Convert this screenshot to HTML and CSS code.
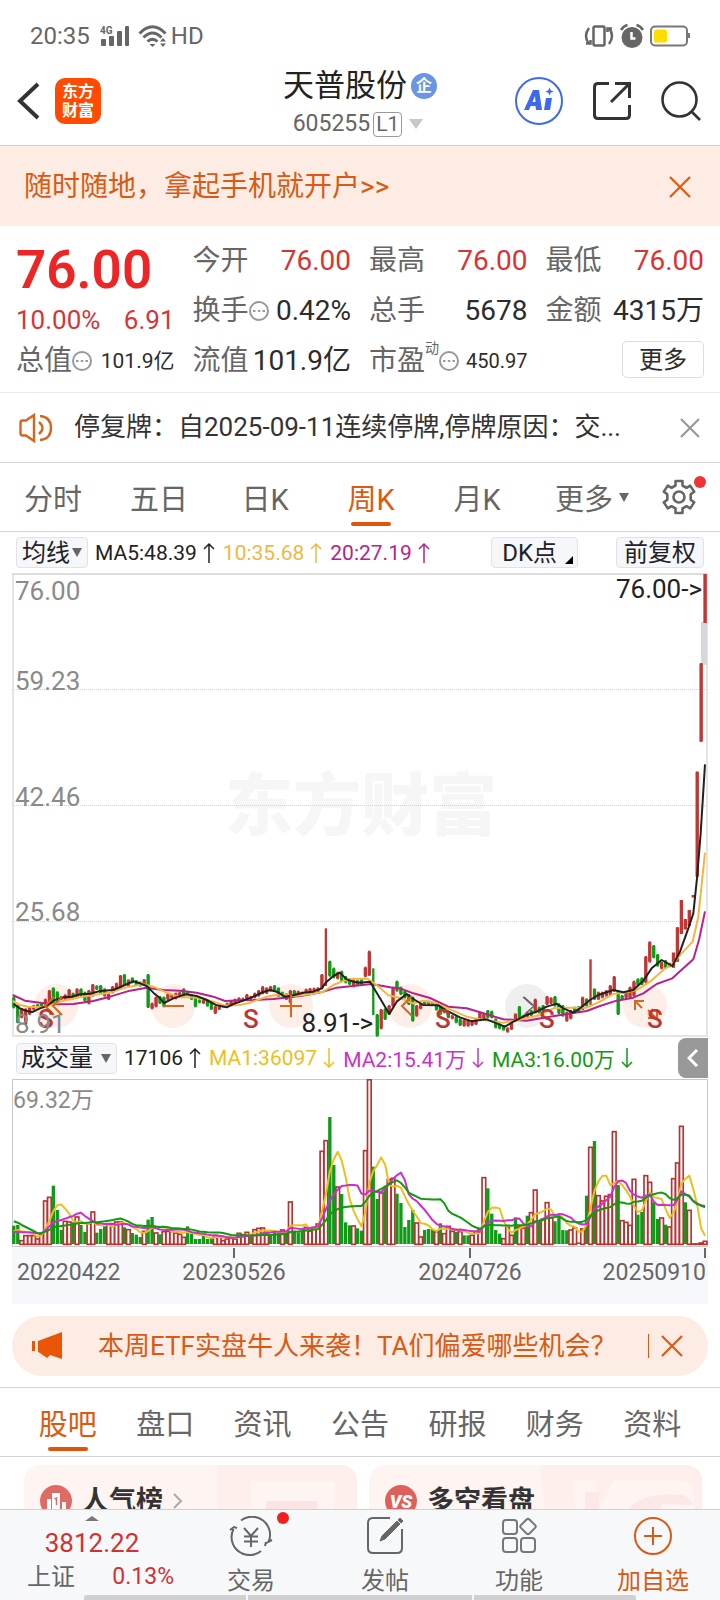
FILE: index.html
```html
<!DOCTYPE html>
<html lang="zh-CN">
<head>
<meta charset="utf-8">
<meta name="viewport" content="width=device-width, initial-scale=1">
<title>天普股份 605255</title>
<link rel="stylesheet" href="styles.css">
</head>
<body>
<div class="app">
  <div class="status">
    <div class="status-side">
      <span class="clock">20:35</span>
      <svg class="signal" width="30" height="22" viewBox="0 0 30 22" fill="#666"><text x="0" y="9" font-size="10" font-weight="700">4G</text><rect x="1" y="14" width="5" height="7" rx="1"/><rect x="9" y="11" width="5" height="10" rx="1"/><rect x="17" y="6" width="5" height="15" rx="1"/><rect x="25" y="1" width="4" height="20" rx="1"/></svg>
      <svg class="wifi" width="30" height="24" viewBox="0 0 30 24" fill="none" stroke="#666" stroke-width="3"><path d="M1.500 9.500Q14.500-4 27.500 9.500M5.500 13.500Q14.500 4.500 23.500 13.500M9.500 17.500Q14.500 13 19.500 17.500"/><path d="M11.500 20h6L14.500 23zM22 17.500L25 14l3 3.500zM22 19.500h6L25 23z" fill="#666" stroke="none"/></svg>
      <span class="clock">HD</span>
    </div>
    <div class="status-side status-icons">
      <svg width="30" height="24" viewBox="0 0 30 24" fill="none" stroke="#666" stroke-width="2.500"><rect x="9.500" y="2.500" width="11" height="19" rx="1.500"/><path d="M5 4Q-1 12 5 20M25 4Q31 12 25 20M2 19.500h4.500V16M28 4.500h-4.500V8"/></svg>
      <svg width="26" height="26" viewBox="0 0 26 26" fill="none" stroke="#666" stroke-width="2.500"><circle cx="13" cy="14.500" r="10.500" fill="#666" stroke="none"/><path d="M2 7Q4.500 3 8.500 2M24 7Q21.500 3 17.500 2"/><path d="M12.500 9v6.500h4" stroke="#fff"/></svg>
      <svg width="41" height="22" viewBox="0 0 41 22"><rect x="1" y="1.500" width="36" height="19" rx="4" fill="none" stroke="#777" stroke-width="2"/><rect x="4" y="4.500" width="13" height="13" rx="2" fill="#ffdc00"/><rect x="38" y="8" width="2" height="5" fill="#777"/></svg>
    </div>
  </div>

  <header class="header">
    <div class="header-left">
      <button class="icon-button" aria-label="返回"><svg width="24" height="38" viewBox="0 0 24 38" fill="none" stroke="#333" stroke-width="4"><path d="M21 2L3 19l18 17"/></svg></button>
      <span class="brand">东方<br>财富</span>
    </div>
    <div class="header-title">
      <h1>天普股份<span class="badge">企</span></h1>
      <div class="code">605255<span class="level">L1</span><svg width="14" height="10" viewBox="0 0 14 10" fill="#c8c8c8"><path d="M0 0h14L7 10z"/></svg></div>
    </div>
    <div class="header-right">
      <button class="icon-button" aria-label="AI"><svg width="48" height="48" viewBox="0 0 48 48"><circle cx="24" cy="24" r="23" fill="none" stroke="#3d68f0" stroke-width="2"/><path d="M9 33L18 13h6l3 20h-6l-.5-4h-5L14 33zM17.500 25h3l-.5-6zM31 21h6l-2 12h-6zM34.500 10.500l1.200 2.800 2.800 1.200-2.800 1.200-1.200 2.800-1.200-2.800-2.800-1.200 2.800-1.200z" fill="#3d68f0" fill-rule="evenodd"/></svg></button>
      <button class="icon-button" aria-label="分享"><svg width="38" height="40" viewBox="0 0 38 40" fill="none" stroke="#333" stroke-width="3"><path d="M16 2.500H5Q1.500 2.500 1.500 6V34Q1.500 37.500 5 37.500H33Q36.500 37.500 36.500 34V24M22 2.500H36.500V17M36 3L18 21"/></svg></button>
      <button class="icon-button" aria-label="搜索"><svg width="40" height="40" viewBox="0 0 40 40" fill="none" stroke="#333" stroke-width="2.600"><circle cx="18.500" cy="18.500" r="17"/><path d="M30.500 30.500L39 39"/></svg></button>
    </div>
  </header>

  <main class="content">
    <div class="open-banner">
      <a href="#">随时随地，拿起手机就开户&gt;&gt;</a>
      <button class="icon-button" aria-label="关闭"><svg width="22" height="22" viewBox="0 0 22 22" stroke="#de5a12" stroke-width="2.200"><path d="M1 1l20 20M21 1L1 21"/></svg></button>
    </div>

    <section class="quote">
      <div class="quote-main">
        <div class="price">76.00</div>
        <div class="pair change"><span>10.00%</span><span>6.91</span></div>
      </div>
      <div class="pair up"><span class="name">今开</span><span>76.00</span></div>
      <div class="pair up"><span class="name">最高</span><span>76.00</span></div>
      <div class="pair up"><span class="name">最低</span><span>76.00</span></div>
      <div class="pair"><span class="name">换手<svg class="dots" viewBox="0 0 20 20"><circle cx="10" cy="10" r="9"/><path d="M4 10h2.500M8.800 10h2.500M13.500 10H16"/></svg></span><span>0.42%</span></div>
      <div class="pair"><span class="name">总手</span><span>5678</span></div>
      <div class="pair"><span class="name">金额</span><span>4315万</span></div>
      <div class="pair"><span class="name">总值<svg class="dots" viewBox="0 0 20 20"><circle cx="10" cy="10" r="9"/><path d="M4 10h2.500M8.800 10h2.500M13.500 10H16"/></svg></span><span class="small">101.9亿</span></div>
      <div class="pair"><span class="name">流值</span><span>101.9亿</span></div>
      <div class="pair"><span class="name">市盈<sup>动</sup><svg class="dots" viewBox="0 0 20 20"><circle cx="10" cy="10" r="9"/><path d="M4 10h2.500M8.800 10h2.500M13.500 10H16"/></svg></span><span class="tiny">450.97</span></div>
      <button class="more-button">更多</button>
    </section>

    <div class="notice">
      <svg width="34" height="30" viewBox="0 0 34 30" fill="none" stroke="#d9641e" stroke-width="2.400"><path d="M15 2v26L7 22.500H3.500Q1.500 22.500 1.500 20.500V9.500Q1.500 7.500 3.500 7.500H7z"/><path d="M20 9Q27 15 20 21M21 3Q32 4 32 15T21 27"/></svg>
      <p>停复牌：自2025-09-11连续停牌,停牌原因：交...</p>
      <button class="icon-button" aria-label="关闭"><svg width="20" height="20" viewBox="0 0 20 20" stroke="#999" stroke-width="2.200"><path d="M1 1l18 18M19 1L1 19"/></svg></button>
    </div>

    <nav class="period-tabs">
      <button>分时</button>
      <button>五日</button>
      <button>日K</button>
      <button class="active">周K</button>
      <button>月K</button>
      <button>更多<svg width="10" height="9" viewBox="0 0 10 9" fill="#666"><path d="M0 0h10L5 9z"/></svg></button>
      <button class="gear" aria-label="设置"><svg width="36" height="36" viewBox="0 0 36 36" fill="none" stroke="#666" stroke-width="2.600" stroke-linejoin="round"><path d="M14.500 2h7v4.500l4 2.300 3.700-2.200 4 6-3.500 2.600v5.600l3.500 2.600-4 6-3.700-2.200-4 2.300V34h-7v-4.500l-4-2.300-3.700 2.200-4-6 3.500-2.600v-5.600L2.800 12.600l4-6 3.700 2.200 4-2.300z"/><circle cx="18" cy="18" r="5.500"/></svg></button>
    </nav>

    <div class="indicator-row">
      <label class="picker picker-ma"><select aria-label="均线"><option>均线</option></select><svg width="10" height="9" viewBox="0 0 10 9" fill="#666"><path d="M0 0h10L5 9z"/></svg></label>
      <span class="ma dark">MA5:48.39<svg class="arrow" viewBox="0 0 12 22"><path d="M6 21V2M1 7l5-5 5 5"/></svg></span>
      <span class="ma gold">10:35.68<svg class="arrow" viewBox="0 0 12 22"><path d="M6 21V2M1 7l5-5 5 5"/></svg></span>
      <span class="ma plum">20:27.19<svg class="arrow" viewBox="0 0 12 22"><path d="M6 21V2M1 7l5-5 5 5"/></svg></span>
      <button class="chip chip-dk">DK点<svg width="8" height="8" viewBox="0 0 8 8"><path d="M8 0v8H0z"/></svg></button>
      <button class="chip">前复权</button>
    </div>

    <svg class="price-chart" viewBox="0 0 696 464" role="img" aria-label="周K线">
      <text class="watermark" x="349" y="257" text-anchor="middle">东方财富</text>
      <path class="grid" d="M0 116.500H696M0 232.500H696M0 348.500H696"/>
      <path d="M1 0V463H695V0" fill="none" stroke="#ddd" stroke-width="1.500"/>
      <path d="M0 1H696" stroke="#ddd" stroke-width="2"/>
      <g fill="#fdeee8"><circle cx="44" cy="433" r="22"/><circle cx="161" cy="433" r="22"/><circle cx="279" cy="433" r="22"/><circle cx="398" cy="433" r="22"/><circle cx="515" cy="433" r="22" fill="#efefef"/><circle cx="633" cy="433" r="22"/></g>
      <rect x="689" y="49" width="6" height="43" fill="#d5d8dc"/>
      <g id="candles" transform="translate(-12 327) scale(.33333)"></g>
      <g class="markers"><path d="M42 424l-9 9 9 9M50 424l-9 9 9 9M151 433h21M268 433h22M279 422v22M400 423l-10 10 10 10"/><path d="M512 424l10 9-10 9M511 424l9 8" stroke="#666" stroke-width="1.500"/><path d="M623 437v-9h9M624 429l6 6M636 437l8 8M645 436v9h-9M637 440l4-4"/></g>
      <g class="sell"><text x="26" y="455">S</text><text x="231" y="455">S</text><text x="423" y="455">S</text><text x="527" y="455">S</text><text x="635" y="455">S</text></g>
      <g class="axis"><text x="3" y="27">76.00</text><text x="3" y="117">59.23</text><text x="3" y="233">42.46</text><text x="3" y="348">25.68</text><text x="3" y="460">8.91</text></g>
      <g class="axis mark"><text x="690" y="25" text-anchor="end">76.00-&gt;</text><text x="361" y="459" text-anchor="end">8.91-&gt;</text></g>
    </svg>

    <div class="indicator-row volume-row">
      <label class="picker picker-vol"><select aria-label="指标"><option>成交量</option></select><svg width="10" height="9" viewBox="0 0 10 9" fill="#666"><path d="M0 0h10L5 9z"/></svg></label>
      <span class="ma dark">17106<svg class="arrow" viewBox="0 0 12 22"><path d="M6 21V2M1 7l5-5 5 5"/></svg></span>
      <span class="ma yellow">MA1:36097<svg class="arrow" viewBox="0 0 12 22"><path d="M6 1v19M1 15l5 5 5-5"/></svg></span>
      <span class="ma violet">MA2:15.41万<svg class="arrow" viewBox="0 0 12 22"><path d="M6 1v19M1 15l5 5 5-5"/></svg></span>
      <span class="ma green">MA3:16.00万<svg class="arrow" viewBox="0 0 12 22"><path d="M6 1v19M1 15l5 5 5-5"/></svg></span>
      <button class="drawer" aria-label="展开"><svg width="12" height="18" viewBox="0 0 12 18" fill="none" stroke="#fff" stroke-width="3"><path d="M10 1L2 9l8 8"/></svg></button>
    </div>

    <svg class="volume-chart" viewBox="0 0 696 168" role="img" aria-label="成交量">
      <path d="M.5 .5H695.500V167.500H.5z" fill="none" stroke="#c8c8c8"/>
      <g id="volumes" transform="translate(-12 166) scale(.33333)"></g>
      <text class="vol-max" x="1" y="29">69.32万</text>
    </svg>
    <div class="dates"><span>20220422</span><span class="tick">20230526</span><span class="tick">20240726</span><span class="tick-end">20250910</span></div>

    <div class="promo">
      <svg width="32" height="28" viewBox="0 0 32 28" fill="#e95504"><path d="M0 9h3v10H0zM6 9L30 0v27l-12-4-3 3-7-5-2-1z"/></svg>
      <a href="#">本周ETF实盘牛人来袭！TA们偏爱哪些机会？</a>
      <span class="divider"></span>
      <button class="icon-button" aria-label="关闭"><svg width="22" height="22" viewBox="0 0 22 22" stroke="#de5a12" stroke-width="2.200"><path d="M1 1l20 20M21 1L1 21"/></svg></button>
    </div>

    <nav class="section-tabs">
      <button class="active">股吧</button><button>盘口</button><button>资讯</button><button>公告</button><button>研报</button><button>财务</button><button>资料</button>
    </nav>

    <div class="cards">
      <a class="card" href="#">
        <svg class="card-art" width="140" height="60" viewBox="0 0 140 60"><path d="M0 0h140v60H0z" fill="#feefed"/><path d="M34 16h84v44H34z" fill="#fef5f3"/><path d="M49 36h51v24H49z" fill="#fce4e2"/></svg>
        <svg width="32" height="32" viewBox="0 0 32 32"><circle cx="16" cy="16" r="16" fill="#df6b65"/><path d="M7 14h4v14H7zM12 8h8v20h-8zM22 17h4v11h-4z" fill="#fff"/><path d="M14.500 14l2-1v7" fill="none" stroke="#df6b65" stroke-width="1.500"/></svg>
        <span>人气榜</span>
        <svg width="10" height="16" viewBox="0 0 10 16" fill="none" stroke="#aaa" stroke-width="2"><path d="M1 1l7 7-7 7"/></svg>
      </a>
      <a class="card" href="#">
        <svg class="card-art" width="162" height="60" viewBox="0 0 162 60"><path d="M0 0h162v60H6z" fill="#feefed"/><path d="M32 15h23l4 28 15-28h62q16 0 18 10v35H38z" fill="#fef4f2"/><path d="M45 27h14v33H45zM84 60q2-34 58-30 10 3 10 10l-28-1q-12 6 10 21z" fill="#fce8e6"/></svg>
        <svg width="32" height="32" viewBox="0 0 32 32"><circle cx="16" cy="16" r="16" fill="#df605a"/><text x="16" y="23" text-anchor="middle" font-size="18" font-weight="900" font-style="italic" fill="#fff">VS</text></svg>
        <span>多空看盘</span>
      </a>
    </div>
  </main>

  <footer class="bottom-bar">
    <button class="index">
      <svg class="caret" width="14" height="5" viewBox="0 0 14 5" fill="#777"><path d="M0 5L7 0l7 5z"/></svg>
      <span class="index-value">3812.22</span>
      <span class="index-line"><span>上证</span><span class="index-rate">0.13%</span></span>
    </button>
    <button class="action trade"><svg width="44" height="40" viewBox="0 0 44 40" fill="none" stroke="#666" stroke-width="2"><path d="M12 4.500A18 18 0 0 1 39.500 26M32 35A18 18 0 0 1 4.500 13M1 14l4-3 3 1M36 28l3-2 4-2M36 30l1-4M15 12l7 8 7-8M22 20v11M15 20.500h14M15 25.500h14"/></svg>交易</button>
    <button class="action"><svg width="38" height="40" viewBox="0 0 38 40" fill="none" stroke="#666" stroke-width="2"><path d="M24 2H7Q2 2 2 7V32Q2 37 7 37H31Q36 37 36 32V13"/><path d="M14 25l2-5L31 5l3 3-15 15zM32 4l2-2 3 3-2 2z" fill="#666" stroke-width="1"/></svg>发帖</button>
    <button class="action"><svg width="36" height="40" viewBox="0 0 36 40" fill="none" stroke="#777" stroke-width="2"><rect x="2" y="4" width="14" height="14" rx="3"/><rect x="2" y="22" width="14" height="14" rx="3"/><rect x="20" y="22" width="14" height="14" rx="3"/><rect x="21" y="4.500" width="12" height="12" rx="2" transform="rotate(45 27 10.500)"/></svg>功能</button>
    <button class="action accent"><svg width="40" height="40" viewBox="0 0 40 40" fill="none" stroke="#d85a14" stroke-width="2"><circle cx="20" cy="20" r="18"/><path d="M11 20h18M20 11v18"/></svg>加自选</button>
    <div class="home-line"><i></i><i></i><i></i></div>
  </footer>
</div>
<script src="charts.js"></script>
</body>
</html>
```
FILE: styles.css
```css
* { box-sizing: border-box; }
body { margin: 0; background: #fff; color: #333; font-family: Roboto, "Noto Sans CJK SC", sans-serif; }
button, select { font: inherit; color: inherit; border: 0; padding: 0; margin: 0; background: none; }
a { color: inherit; text-decoration: none; }
h1, p { margin: 0; font-weight: 400; }
svg { display: block; flex: none; }

.app { display: flex; flex-direction: column; height: 100vh; overflow: hidden; }
.content { flex: 1; min-height: 0; overflow: hidden; }

.status { display: flex; justify-content: space-between; padding: 12px 29px 0 30px; height: 60px; }
.status-side { display: flex; align-items: center; gap: 8px; }
.status-icons { gap: 5px; }
.clock { font-size: 24px; line-height: 48px; color: #666; }
.signal { margin-left: 2px; }
.wifi { margin-right: -5px; }

.header { display: grid; grid-template-columns: 1fr auto 1fr; align-items: center; padding: 0 19px 3px; border-bottom: 1px solid #d2d2d6; }
.header-left, .header-right { display: flex; align-items: center; }
.header-left { gap: 14px; margin-left: -2px; }
.header-right { justify-content: flex-end; gap: 30px; }
.icon-button { display: flex; align-items: center; justify-content: center; }
.brand { width: 46px; height: 46px; padding: 4px 0; border-radius: 10px; background: #ff4a00; color: #fff; font-size: 16px; font-weight: 700; line-height: 19px; text-align: center; }
.header-title { padding-top: 6px; }
.header-title h1 { display: flex; align-items: center; justify-content: center; gap: 4px; font-size: 31px; line-height: 40px; color: #222; }
.badge { width: 26px; height: 26px; border-radius: 50%; background: #6a94e4; color: #fff; font-size: 16px; font-weight: 700; line-height: 26px; text-align: center; }
.code { display: flex; align-items: center; justify-content: center; gap: 3px; padding-right: 4px; font-size: 23px; line-height: 36px; color: #666; }
.code svg { margin-left: 4px; }
.level { padding: 0 2px; border: 1px solid #999; border-radius: 4px; font-size: 21px; line-height: 23px; }

.open-banner { display: flex; align-items: center; justify-content: space-between; padding: 2px 29px 0 24px; background: #fdece3; color: #d85a14; font-size: 28px; line-height: 78px; }

.quote { display: grid; grid-template-columns: repeat(4, 1fr); column-gap: 18px; align-items: center; padding: 10px 16px 6px; border-bottom: 1px solid #eaeaea; font-size: 28px; line-height: 50px; color: #2c2c2c; }
.quote-main { grid-row: span 2; }
.price { font-size: 53px; font-weight: 600; line-height: 68px; color: #ee2525; }
.pair { display: flex; justify-content: space-between; align-items: center; white-space: nowrap; }
.change { font-size: 26px; line-height: 32px; color: #d83434; }
.up { color: #d83434; }
.name { display: flex; align-items: center; color: #666; }
.name sup { align-self: flex-start; font-size: 14px; line-height: 24px; }
.dots { width: 20px; height: 20px; fill: none; stroke: #999; stroke-width: 2; }
.small { font-size: 21px; }
.tiny { font-size: 20px; }
.more-button { justify-self: end; width: 82px; height: 37px; margin-bottom: 3px; border: 1px solid #ddd; border-radius: 5px; font-size: 24px; line-height: 32px; }

.notice { display: flex; align-items: center; padding: 0 20px 0 19px; border-bottom: 1px solid #d8d8d8; font-size: 26px; line-height: 69px; }
.notice p { flex: 1; margin-left: 21px; white-space: nowrap; overflow: hidden; }

.period-tabs { display: grid; grid-template-columns: 106fr 106fr 106fr 106fr 106fr 124fr 50fr; padding-right: 16px; border-bottom: 1px solid #d4d4d4; }
.period-tabs button, .section-tabs button { position: relative; display: flex; align-items: center; justify-content: center; gap: 6px; height: 68px; font-size: 29px; color: #666; }
.period-tabs .active, .section-tabs .active { color: #dc5a10; }
.period-tabs .active::after, .section-tabs .active::after { content: ""; position: absolute; bottom: 5px; left: calc(50% - 20px); width: 40px; height: 4px; border-radius: 2px; background: #e05508; }
.gear::after { content: ""; position: absolute; top: 13px; right: -2px; width: 12px; height: 12px; border-radius: 50%; background: #f03434; }

.indicator-row { display: flex; align-items: center; height: 41px; padding: 0 16px; font-size: 21px; white-space: nowrap; }
.picker { position: relative; display: block; height: 31px; }
.picker svg { position: absolute; right: 6px; top: 11px; pointer-events: none; }
.picker select { appearance: none; width: 100%; height: 31px; padding-left: 5px; border: 1px solid #e0e2e6; border-radius: 4px; background: #f6f7fa; color: #222; font-size: 24px; line-height: 28px; }
.picker-ma { width: 72px; }
.picker-vol { width: 101px; }
.picker-vol select { padding-left: 4px; }
.ma { display: flex; align-items: center; gap: 6px; margin-left: 8px; }
.arrow { width: 12px; height: 22px; fill: none; stroke: currentColor; stroke-width: 1.5; }
.dark { color: #222; margin-left: 7px; }
.gold { color: #f0b840; }
.plum { color: #b8208a; }
.yellow { color: #ecc01c; }
.violet { color: #cc30cc; }
.green { color: #109a10; }
.chip { height: 31px; padding: 0 7px; border: 1px solid #e0e2e6; border-radius: 4px; background: #f6f7fa; color: #222; font-size: 24px; line-height: 28px; }
.chip-dk { display: flex; align-items: flex-end; gap: 8px; margin: 0 38px 0 auto; padding: 0 4px 0 10px; }
.chip-dk svg { margin-bottom: 3px; }

.price-chart, .volume-chart { width: calc(100% - 24px); height: auto; margin: 0 12px; }
.watermark { font-size: 68px; font-weight: 900; fill: #f6f6f6; }
.grid { stroke: #d2d2d2; stroke-width: 1; stroke-dasharray: 1 1; }
.axis { font-size: 26px; fill: #8a8a8a; }
.mark { fill: #222; }
.sell { font-size: 26px; font-weight: 500; fill: #c03434; }
.markers { fill: none; stroke: #d9661c; stroke-width: 2; }
.vol-max { font-size: 23px; fill: #8a8a8a; }
.rise { fill: #c23535; }
.fall { fill: #109a18; }
.rise-box { fill: #fff; stroke: #b83232; stroke-width: 5; }
.line { fill: none; stroke-width: 6; stroke-linejoin: round; }

.volume-row { padding-right: 12px; height: 42px; }
.drawer { display: flex; align-items: center; justify-content: center; width: 30px; height: 40px; margin-left: auto; border-radius: 8px 0 0 8px; background: #999; }

.dates { display: grid; grid-template-columns: minmax(0, 99fr) minmax(0, 236fr) minmax(0, 236fr) minmax(0, 118fr); height: 57px; margin: 0 12px; padding: 0 2px 0 5px; background: #f7f8fb; color: #666; font-size: 23px; line-height: 51px; }
.dates span { position: relative; text-align: center; }
.dates span:first-child { text-align: left; }
.dates .tick-end { text-align: right; }
.tick::before, .tick-end::before { content: ""; position: absolute; top: 1px; left: calc(50% - 1px); width: 2px; height: 10px; background: #666; }
.tick-end::before { left: auto; right: 0; }

.promo { display: flex; align-items: center; margin: 12px 12px 11px; padding: 0 25px 0 20px; border-radius: 30px; background: #fdece3; color: #d85a14; font-size: 26px; line-height: 60px; white-space: nowrap; }
.promo a { flex: 1; margin-left: 34px; }
.divider { width: 1px; height: 24px; margin-right: 12px; background: #d85a14; }

.section-tabs { display: grid; grid-template-columns: repeat(7, 1fr); padding: 0 19px; border-top: 1px solid #d4d4d4; border-bottom: 1px solid #d4d4d4; }

.cards { display: grid; grid-template-columns: 1fr 1fr; gap: 12px; padding: 8px 18px 0 24px; }
.card { position: relative; display: flex; align-items: center; gap: 10px; height: 120px; padding: 0 16px 48px; border-radius: 16px; overflow: hidden; background: #fef5f3; color: #333; font-size: 27px; font-weight: 700; }
.card > * { position: relative; }
.card > .card-art { position: absolute; top: 0; right: 0; }
.card span { line-height: 40px; }

.bottom-bar { position: relative; display: grid; grid-template-columns: 184fr 134fr 134fr 134fr 134fr; height: 91px; border-top: 1px solid #d0d0d0; background: #f7f8fa; color: #666; font-size: 24px; }
.index { position: relative; display: flex; flex-direction: column; justify-content: flex-start; padding-top: 14px; }
.index-value { color: #d43030; font-size: 26px; line-height: 38px; text-align: center; }
.index-line { display: flex; justify-content: space-between; padding: 0 10px 0 27px; line-height: 30px; }
.index-rate { color: #d43030; font-size: 23px; }
.caret { position: absolute; top: 6px; left: calc(50% - 7px); }
.action { position: relative; display: flex; flex-direction: column; align-items: center; padding-top: 6px; line-height: 50px; }
.accent { color: #d85a14; }
.trade::after { content: ""; position: absolute; top: 2px; right: 29px; width: 12px; height: 12px; border-radius: 50%; background: #f02020; }
.home-line { position: absolute; bottom: 0; left: 84px; right: 84px; display: grid; grid-template-columns: 162fr 224fr 162fr; gap: 2px; height: 5px; border-radius: 3px 3px 0 0; overflow: hidden; }
.home-line i { background: #d0d0d2; }
```
FILE: charts.js
```js
// Weekly bars. Prices are [top, bottom, direction]; volumes are signed by direction.
const NS = "http://www.w3.org/2000/svg";
const FIRST = 41.5;
const STEP = 11.85;

const candles = `290 325 g,315 370 g,325 355 r,325 375 r,318 345 r,315 330 r,312 325 g,308 322 g,296 315 r,270 315 r,262 312 g,274 310 g,288 300 r,283 300 r,267 300 r,278 298 g,265 295 r,265 290 g,275 305 g,270 313 r,252 290 r,256 270 g,255 285 g,265 290 r,280 300 r,258 280 r,248 268 r,225 265 r,222 258 g,238 260 r,232 250 g,240 258 g,245 260 g,237 258 r,222 324 g,308 328 r,290 322 r,288 312 g,290 322 g,280 300 r,283 295 r,278 298 r,276 290 r,265 290 g,275 285 g,282 300 g,290 322 g,298 310 g,298 312 r,300 320 g,305 330 g,318 342 r,318 330 r,315 322 g,308 318 r,300 318 r,296 310 r,292 305 r,293 302 r,282 300 r,288 300 r,278 295 r,270 290 r,258 283 r,262 282 r,258 275 r,255 275 g,262 290 g,275 290 g,280 300 r,270 310 r,270 288 g,272 285 r,275 288 r,266 280 r,264 280 r,263 278 r,262 276 r,222 268 r,85 258 r,182 230 g,203 235 g,215 238 r,212 245 g,228 250 g,235 255 g,238 262 r,240 258 g,235 255 g,200 232 r,152 228 r,205 345 g,342 410 g,327 388 r,325 360 g,315 345 r,262 320 r,242 275 g,260 285 g,272 295 g,282 315 g,290 365 g,315 350 r,308 328 r,300 315 g,302 315 r,305 318 g,310 332 g,315 345 g,325 340 g,335 355 g,345 358 r,348 370 g,355 378 g,358 380 r,358 380 r,360 378 r,355 375 r,335 362 r,340 358 r,330 355 g,332 355 g,355 385 g,370 388 g,375 392 g,382 398 r,365 390 r,340 365 r,318 358 g,345 355 r,335 352 r,330 348 g,296 340 r,320 340 g,315 335 g,288 315 r,292 312 r,288 320 g,310 342 g,315 350 g,335 365 r,330 358 r,320 340 g,318 338 g,290 330 r,295 320 g,178 315 r,265 300 g,275 300 r,275 295 r,270 290 r,255 288 r,228 275 r,270 345 g,285 300 g,275 295 r,260 295 r,242 290 r,235 258 g,232 255 g,168 250 r,124 188 r,135 175 g,162 200 g,185 208 r,180 205 g,188 202 r,158 203 r,82 185 r,0 102 r,57 88 r,30 78 r,-15 -8 r,-385 -70 r,-710 -475 r,-978 -831 r`
  .split(",").map(s => s.split(" "));

const volumes = [-58, -60, 15, 30, 30, 30, 20, 33, 134, 145, -178, -105, -45, 73, 71, -68, 86, -60, -39, 66, 101, -37, -48, -56, 66, 66, 71, 71, -53, 48, -36, -31, -24, 43, -76, -84, 38, -32, 42, 43, 43, 38, 34, 25, -56, -34, -18, -18, -27, -18, -23, 31, 26, 15, 20, 23, 20, 37, 33, 40, -28, 48, 52, 53, 38, -28, -38, -36, 47, -38, 131, -43, -38, -43, 55, 43, 55, 65, 283, 315, -384, -240, 176, -153, -68, -59, 59, -50, -43, 285, 498, -235, -138, 158, -178, 198, 202, -154, -126, -54, -75, -105, 68, 26, -45, -48, -48, 42, -65, 36, 58, 43, -39, 42, -29, -29, 31, 42, 48, 204, -170, -94, -45, -34, 21, 55, 31, -83, 56, 53, -88, 99, 167, -73, 80, 129, 83, -71, -84, -45, -44, 47, 53, -8, 50, -148, 295, -312, 150, 134, 148, 153, 342, -180, 75, 70, 61, 199, -91, -99, 210, 190, -128, -78, 83, -61, 56, 201, 248, 358, -128, 106, 5, 5, 8, 13];

// Weeks before the visible range, used by the moving averages.
const earlier = [150, 150, 150, 150, 150, 150, 36, 36, 36, 36, 36, 36, 36, 36, 36, 36, 36, 36, 36];

const averages = [
  ["#b8208a", "38,285 75,302 120,308 160,313 220,312 280,303 330,290 390,272 440,263 490,270 540,272 590,278 640,290 675,303 720,301 760,300 820,297 870,292 920,285 970,275 1010,263 1080,256 1115,252 1170,262 1200,265 1240,280 1290,294 1345,320 1400,325 1450,340 1510,358 1580,362 1640,352 1700,342 1760,333 1800,318 1850,302 1900,293 1930,280 1970,252 2017,235 2050,205 2080,178 2097,120 2115,34"],
  ["#f0b840", "38,303 60,315 85,320 130,322 155,315 190,302 230,293 280,285 330,278 380,262 430,253 460,260 500,278 540,292 570,292 610,295 640,305 675,317 720,315 750,308 800,290 840,283 880,288 930,283 970,275 1000,255 1030,243 1060,236 1080,236 1105,238 1130,255 1165,286 1200,294 1240,310 1270,302 1310,310 1350,328 1400,350 1450,360 1510,368 1570,357 1620,345 1660,325 1700,323 1760,323 1800,305 1840,282 1880,277 1910,270 1950,245 1990,210 2017,192 2050,155 2078,125 2095,50 2115,-142"],
  ["#222", "41,312 60,325 80,333 97,336 120,325 140,318 160,302 190,292 215,290 240,283 270,281 300,273 340,270 375,255 400,244 420,250 440,258 460,278 480,295 492,309 520,295 556,283 590,288 620,300 650,316 680,322 700,312 730,302 760,290 790,276 810,270 830,275 855,290 880,286 910,278 940,275 965,265 980,245 1000,228 1020,218 1040,238 1060,245 1080,248 1110,245 1140,295 1168,342 1190,305 1220,282 1245,300 1270,315 1315,316 1340,332 1380,352 1415,364 1460,358 1490,370 1515,380 1540,365 1580,345 1610,335 1640,320 1670,311 1690,325 1720,338 1740,325 1770,300 1795,285 1840,270 1870,277 1900,270 1930,242 1955,205 1985,180 2017,198 2040,155 2065,85 2080,40 2091,-65 2102,-200 2115,-407"]
];

function add(parent, name, attrs) {
  const node = document.createElementNS(NS, name);
  for (const key in attrs) node.setAttribute(key, attrs[key]);
  parent.appendChild(node);
}

const priceLayer = document.getElementById("candles");
candles.forEach(([top, bottom, dir], i) => {
  const tall = bottom - top > 120 && i < 160;
  const trim = i < 167 ? 3 : 0;
  const x = FIRST + i * STEP;
  const cls = dir === "r" ? "rise" : "fall";
  add(priceLayer, "rect", { x: x - 3.5, y: top, width: 7, height: bottom - top, class: cls });
  if (!tall) add(priceLayer, "rect", { x: x - 5, y: +top + trim, width: 10, height: Math.max(3, bottom - top - 2 * trim), class: cls });
});
averages.forEach(([stroke, points]) => add(priceLayer, "polyline", { points, stroke, class: "line" }));

const volumeLayer = document.getElementById("volumes");
volumes.forEach((v, i) => {
  const x = FIRST + i * STEP;
  const h = Math.abs(v);
  if (v > 0) add(volumeLayer, "rect", { x: x - 5.5, y: 2 - h, width: 11, height: Math.max(1, h - 4), class: "rise-box" });
  else add(volumeLayer, "rect", { x: x - 5, y: -h, width: 10, height: h - 3, class: "fall" });
});

const series = earlier.concat(volumes.map(Math.abs));
[[5, "#ecc01c"], [10, "#cc30cc"], [20, "#109a10"]].forEach(([span, stroke]) => {
  const points = volumes.map((_, i) => {
    const end = i + earlier.length + 1;
    const sum = series.slice(end - span, end).reduce((a, b) => a + b, 0);
    return (FIRST + i * STEP) + "," + (-sum / span);
  }).join(" ");
  add(volumeLayer, "polyline", { points, stroke, class: "line" });
});
```
